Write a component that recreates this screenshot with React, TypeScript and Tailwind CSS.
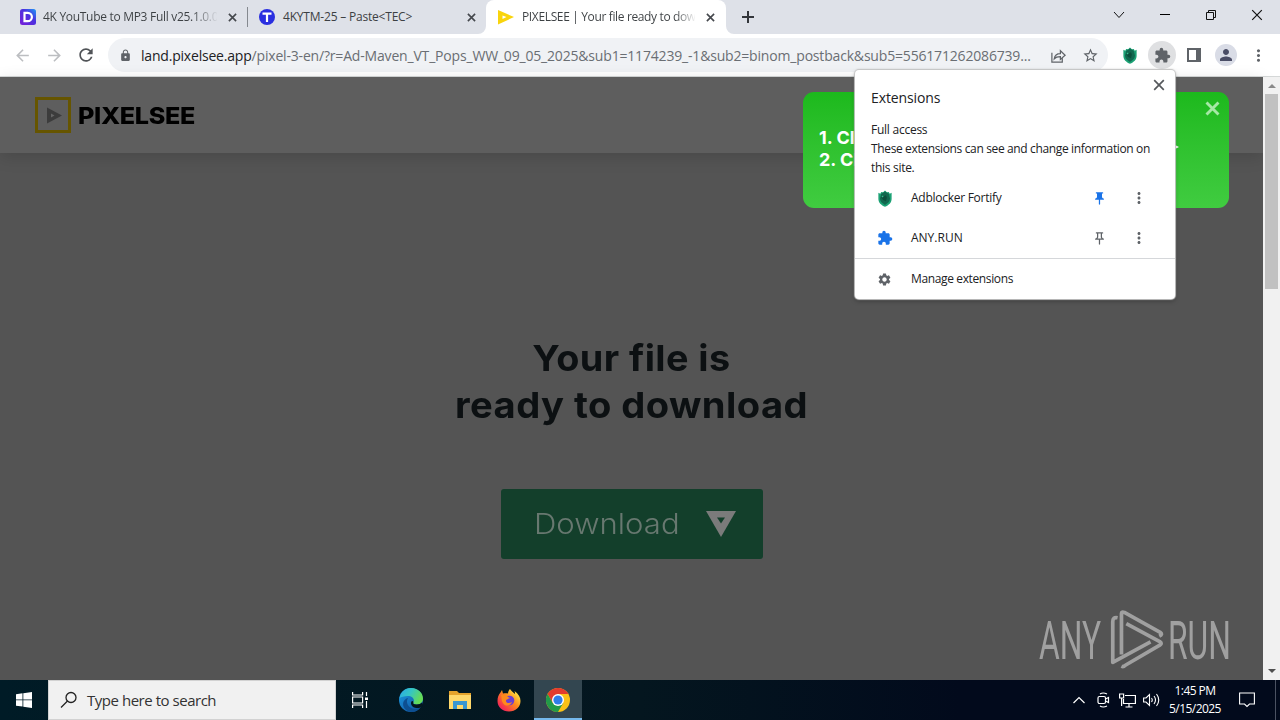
import type { ReactNode } from "react";
import {
  MdArrowBack,
  MdArrowForward,
  MdExtension,
  MdLock,
  MdMoreVert,
  MdOutlinePushPin,
  MdPerson,
  MdPushPin,
  MdRefresh,
  MdSettings,
  MdStarBorder,
} from "react-icons/md";

function Cross({ className }: { className: string }) {
  return (
    <svg viewBox="0 0 10 10" className={className} fill="none" stroke="currentColor">
      <path d="M1 1l8 8M9 1l-8 8" />
    </svg>
  );
}

function ShieldIcon() {
  return (
    <svg viewBox="0 0 16 18" className="h-[17px] w-4">
      <path d="M1 3l2 1 1-2 2 .5L8 .5l2 2 2-.5 1 2 2-1v6.500c0 4-3 6.500-7 8.300-4-1.800-7-4.300-7-8.300z" fill="#1ba174" />
      <path d="M4 4l2-1 2-1.500L10 3l2 1 1.300 5c0 3-2.300 5-5.300 6.800C5 14 2.700 12 2.700 9z" fill="#12684f" />
      <path d="M6 5l1 1.500 2-1 1 2.500-1 4-3-1.500-2-2.500z" fill="#0c4f3c" />
      <path d="M4.500 6.500l1.500-1 .500 1.500-1.500 1z" fill="#35c08e" />
    </svg>
  );
}

function Tab({ icon, title, active = false }: { icon: ReactNode; title: ReactNode; active?: boolean }) {
  return (
    <div
      className={
        active
          ? "relative flex h-[34px] w-60 items-center rounded-t-lg bg-white pl-3"
          : "relative flex h-[34px] w-[239px] items-center pl-3"
      }
    >
      {active && (
        <>
          <svg className="absolute bottom-0 -left-2 size-2" viewBox="0 0 8 8">
            <path d="M8 0v8H0a8 8 0 0 0 8-8z" fill="#fff" />
          </svg>
          <svg className="absolute -right-2 bottom-0 size-2" viewBox="0 0 8 8">
            <path d="M0 0v8h8a8 8 0 0 1-8-8z" fill="#fff" />
          </svg>
        </>
      )}
      <div className="w-4 shrink-0">{icon}</div>
      <div className="ml-[7px] w-[174px] shrink-0 overflow-hidden text-[12px] whitespace-nowrap text-[#3c4043]">
        {title}
      </div>
      <Cross className="ml-[11px] size-[9px] shrink-0 stroke-[1.8] text-[#45484d]" />
    </div>
  );
}

function TabStrip() {
  return (
    <div className="flex h-[34px] bg-[#dee1e8] pl-2">
      <Tab
        icon={
          <svg viewBox="0 0 16 16" className="size-4">
            <defs>
              <linearGradient id="dg" x1="0" y1="1" x2="1" y2="0">
                <stop offset="0" stopColor="#7a1fd8" />
                <stop offset=".6" stopColor="#4a32e0" />
                <stop offset="1" stopColor="#1f9cf5" />
              </linearGradient>
            </defs>
            <rect width="16" height="16" rx="2.500" fill="url(#dg)" />
            <path d="M4.500 3.800h3.200a4.200 4.200 0 0 1 0 8.400H4.500z" fill="none" stroke="#fff" strokeWidth="2.200" />
          </svg>
        }
        title={
          <span className="bg-linear-to-r from-[#3c4043] from-85% to-transparent bg-clip-text tracking-[-0.3px] text-transparent">
            4K YouTube to MP3 Full v25.1.0.0
          </span>
        }
      />
      <div className="relative">
        <span className="absolute top-[7px] left-0 h-5 w-px bg-[#85898f]" />
        <Tab
          icon={
            <svg viewBox="0 0 16 16" className="size-4">
              <circle cx="8" cy="8" r="8" fill="#2a2fe0" />
              <path d="M3.500 4.600h9M8 4.600V13" stroke="#fff" strokeWidth="2.200" />
            </svg>
          }
          title={<span className="ml-[1px] tracking-[-0.2px]">4KYTM-25 – Paste&lt;TEC&gt;</span>}
        />
      </div>
      <Tab
        active
        icon={
          <svg viewBox="0 0 16 16" className="size-4">
            <path d="M0 1l16 7-16 7.500z" fill="#f9d40c" />
            <path d="M4.500 6.500L8.500 8l-4 2z" fill="#fff" />
          </svg>
        }
        title={
          <span className="ml-[1px] bg-linear-to-r from-[#3c4043] from-88% to-transparent bg-clip-text tracking-[-0.36px] text-transparent">
            PIXELSEE | Your file ready to dow
          </span>
        }
      />
      <svg viewBox="0 0 12 12" className="mt-[11px] ml-4 size-3" stroke="#33363b" strokeWidth="2">
        <path d="M6 0v12M0 6h12" />
      </svg>
      <div className="ml-auto flex h-[29px] items-center text-[#111]">
        <div className="flex w-[46px] justify-center">
          <svg viewBox="0 0 12 12" className="size-3" fill="none" stroke="currentColor">
            <path d="M1 3l5 5.500L11 3" />
          </svg>
        </div>
        <div className="flex w-[46px] justify-center">
          <span className="h-px w-[10px] bg-black" />
        </div>
        <div className="flex w-[46px] justify-center">
          <svg viewBox="0 0 10 10" className="size-[10px]" fill="none" stroke="currentColor">
            <path d="M.5 2.500h7v7h-7zM2.500 2.500v-2h7v7h-2" />
          </svg>
        </div>
        <div className="flex w-[46px] justify-center">
          <Cross className="size-[12px] stroke-[1]" />
        </div>
      </div>
    </div>
  );
}

function Slot({ children }: { children: ReactNode }) {
  return <div className="flex w-8 shrink-0 items-center justify-center">{children}</div>;
}

function Toolbar() {
  return (
    <div className="flex h-[43px] items-center border-b border-[#d5d8d8] bg-white pl-1.5 text-[#5f6368]">
      <Slot>
        <MdArrowBack className="size-[19px] text-[#bcbec1]" />
      </Slot>
      <Slot>
        <MdArrowForward className="size-[19px] text-[#bcbec1]" />
      </Slot>
      <Slot>
        <MdRefresh className="size-5 text-[#505357]" />
      </Slot>
      <div className="ml-1.5 flex h-[34px] w-[1000px] items-center rounded-full bg-[#f0f2f5]">
        <MdLock className="ml-[11px] size-[13px] shrink-0" />
        <div className="ml-[9px] w-[901px] shrink-0 text-[14px] whitespace-nowrap text-[#6a6e73]">
          <span className="tracking-[-0.2px] text-[#202124]">land.pixelsee.app</span>
          <span className="tracking-[-0.18px]">
            /pixel-3-en/?r=Ad-Maven_VT_Pops_WW_09_05_2025&amp;sub1=1174239_-1&amp;sub2=binom_postback&amp;sub5=556171262086739...
          </span>
        </div>
        <Slot>
          <svg viewBox="0 0 18 18" className="size-[17px]" fill="none" stroke="currentColor" strokeWidth="1.300">
            <path d="M2 6v10h11v-4M4.500 12.500c.5-4 3-5.500 6.500-5.500V4l5 4.700-5 4.500v-3c-3 0-5 .5-6.500 2.300z" />
          </svg>
        </Slot>
        <Slot>
          <MdStarBorder className="size-[17px]" />
        </Slot>
      </div>
      <div className="ml-1.5 flex">
        <Slot>
          <ShieldIcon />
        </Slot>
        <Slot>
          <div className="flex size-7 items-center justify-center rounded-full bg-[#dfe0e2]">
            <MdExtension className="size-[17px]" />
          </div>
        </Slot>
        <Slot>
          <svg viewBox="0 0 14 14" className="size-[14px]">
            <path d="M1 1h12v12H1z" fill="none" stroke="currentColor" strokeWidth="2" />
            <path d="M9 1h4v12H9z" fill="currentColor" />
          </svg>
        </Slot>
        <Slot>
          <div className="flex size-[22px] items-center justify-center rounded-full bg-[#d9dce6]">
            <MdPerson className="size-[18px] text-[#4a4d66]" />
          </div>
        </Slot>
        <Slot>
          <MdMoreVert className="size-[19px]" />
        </Slot>
      </div>
    </div>
  );
}

function ExtensionRow({ icon, name, pin }: { icon: ReactNode; name: ReactNode; pin: ReactNode }) {
  return (
    <div className="flex h-10 items-center pl-[21px]">
      <div className="flex w-[18px] justify-center">{icon}</div>
      <div className="ml-[17px] w-[180px]">{name}</div>
      <div className="flex w-4 justify-center">{pin}</div>
      <MdMoreVert className="ml-[23px] size-[18px] text-[#5f6368]" />
    </div>
  );
}

function ExtensionsPopup() {
  return (
    <div className="absolute top-[70px] left-[855px] h-[229px] w-80 rounded bg-white text-[12px] text-[#202124] shadow-[0_0_1px_1px_#c4c4c4,0_2px_5px_rgba(0,0,0,.3)]">
      <div className="flex h-[50px] justify-between pl-4">
        <h2 className="mt-[18px] text-[14px] leading-5 tracking-[-0.1px]">Extensions</h2>
        <Cross className="mt-[9px] mr-[10px] size-[12px] stroke-[1.4] text-[#55585c]" />
      </div>
      <div className="h-[58px] pl-4 leading-[19px] whitespace-nowrap">
        <p className="tracking-[-0.25px]">Full access</p>
        <p className="tracking-[-0.36px]">These extensions can see and change information on</p>
        <p className="tracking-[-0.3px]">this site.</p>
      </div>
      <ExtensionRow
        icon={<ShieldIcon />}
        name={<span className="tracking-[-0.27px]">Adblocker Fortify</span>}
        pin={<MdPushPin className="size-[15px] text-[#1a73e8]" />}
      />
      <ExtensionRow
        icon={<MdExtension className="size-4 text-[#1a73e8]" />}
        name={<span>ANY.RUN</span>}
        pin={<MdOutlinePushPin className="size-[15px] text-[#5f6368]" />}
      />
      <div className="flex h-[41px] items-center border-t border-[#d5d7da] pl-[22px]">
        <MdSettings className="size-[15px] text-[#5f6368]" />
        <span className="ml-[19px] tracking-[-0.37px]">Manage extensions</span>
      </div>
    </div>
  );
}

function Toast() {
  return (
    <div className="absolute top-[15px] left-[803px] flex h-[116px] w-[426px] rounded-[11px] bg-linear-to-b from-[#1cb91c] to-[#40cc40] pl-4 font-['Inter',sans-serif] text-white">
      <ol className="mt-[35px] text-[18px] leading-[22px] font-bold whitespace-nowrap">
        <li>1. Cl</li>
        <li>2. Cl</li>
      </ol>
      <svg viewBox="0 0 10 10" className="absolute top-[50px] left-[366px] size-[10px]">
        <path d="M0 0l10 5-10 5z" fill="#fff" />
      </svg>
      <Cross className="absolute top-[9px] right-[9px] size-[15px] stroke-[1.9] text-[#a5e8a5]" />
    </div>
  );
}

function Watermark() {
  return (
    <div className="absolute top-[533px] left-[1039px] flex h-[62px] w-[196px] items-center font-['Roboto',sans-serif] text-[#a0a0a0]">
      <div className="w-[69px]">
        <span className="inline-block origin-left scale-x-[0.6] text-[53px] leading-[62px]">ANY</span>
      </div>
      <svg viewBox="0 0 56 64" className="h-[62px] w-14 shrink-0" fill="none" stroke="currentColor" strokeWidth="3.800" strokeLinejoin="round">
        <path d="M9 8q-5-1-5 4v42l39-21" />
        <path d="M13 46V3.500q0-2 3-1L53 23q3 2-1 4" />
        <path d="M18 14l35 19q2 1.500 0 3L17 57q-2 2-4 1" />
      </svg>
      <div className="ml-1 w-16">
        <span className="inline-block origin-left scale-x-[0.6] text-[53px] leading-[62px]">RUN</span>
      </div>
    </div>
  );
}

function LandingPage() {
  return (
    <div className="relative flex h-[603px]">
      <main className="flex w-[1263px] flex-col items-center bg-[#545454] font-['Inter',sans-serif]">
        <header className="flex h-[76px] w-full items-center bg-[#5e5e5e] pl-[35px] shadow-[0_4px_16px_rgba(0,0,0,.14)]">
          <svg viewBox="0 0 36 36" className="size-9">
            <path d="M1.500 1.500h33v33h-33z" fill="none" stroke="#665500" strokeWidth="3" />
            <path d="M12 10.500v16L27 18.500z" fill="#3c3c3c" />
            <path d="M16 16.500v4l3.500-2z" fill="#666" />
          </svg>
          <span className="mt-[2px] ml-[7px] origin-left scale-x-[1.095] text-[23px] font-extrabold tracking-[-0.3px] text-black">
            PIXELSEE
          </span>
        </header>
        <h1 className="mt-[182px] text-center text-[36px] leading-[47px] font-bold text-[#0c1012]">
          <span className="inline-block scale-x-[1.05] tracking-[0.4px]">Your file is</span>
          <br />
          <span className="inline-block scale-x-[1.06] tracking-[0.4px]">ready to download</span>
        </h1>
        <button className="mt-[60px] flex h-[70px] w-[262px] items-center rounded-[3px] bg-[#133f2b] pl-[33px] text-[28px] font-light text-[#687870]">
          <span className="w-[172px] origin-left scale-x-[1.11] text-left">Download</span>
          <svg viewBox="0 0 30 26" className="h-[26px] w-[30px]">
            <path d="M0 0h30L15 26z" fill="#7b7b7b" />
            <path d="M11 6.500h8l-4 6z" fill="#133f2b" />
          </svg>
        </button>
      </main>
      <div className="flex w-[17px] flex-col items-center bg-[#f1f1f1]">
        <svg viewBox="0 0 8 4" className="mt-[7px] h-1 w-2">
          <path d="M4 0l4 4H0z" fill="#8a8a8a" />
        </svg>
        <div className="mt-[6px] h-[195px] w-[13px] bg-[#c1c1c1]" />
        <svg viewBox="0 0 8 4" className="mt-auto mb-[7px] h-1 w-2">
          <path d="M0 0h8L4 4z" fill="#505050" />
        </svg>
      </div>
      <Toast />
      <Watermark />
    </div>
  );
}

function Taskbar() {
  return (
    <footer className="flex h-10 items-center bg-linear-to-r from-[#001b26] via-[#04161f] via-50% to-[#020a1c] to-75% text-white">
      <div className="flex w-12 justify-center">
        <svg viewBox="0 0 16 16" className="size-4" fill="#fff">
          <path d="M0 2.200l6.500-.9v6.200H0zM7.300 1.200L16 0v7.500H7.300zM0 8.300h6.500v6.200L0 13.700zM7.300 8.300H16V16l-8.700-1.200z" />
        </svg>
      </div>
      <div className="flex h-10 w-72 items-center border border-[#d2d2d2] bg-[#f1f1f1] pl-[11px] text-[#333]">
        <svg viewBox="0 0 18 18" className="size-[18px]" fill="none" stroke="#222" strokeWidth="1.300">
          <circle cx="11" cy="6.500" r="5" />
          <path d="M7.500 10L1 16.500" />
        </svg>
        <span className="ml-[9px] text-[15px] tracking-[-0.47px]">Type here to search</span>
      </div>
      <div className="flex w-12 justify-center">
        <svg viewBox="0 0 16 16" className="size-4" fill="none" stroke="#fff" strokeWidth="1.200">
          <path d="M.6 0v3h10V0M.6 16v-3h10v3M.6 5h10v6H.6zM14.500 0v4M14.500 9v7" />
          <path d="M13 5.500h3v2.500h-3z" fill="#fff" stroke="none" />
        </svg>
      </div>
      <div className="ml-[2px] flex w-[50px] justify-center">
        <svg viewBox="0 0 24 24" className="size-6">
          <defs>
            <linearGradient id="ea" x1="0" y1="0" x2="1" y2=".4">
              <stop offset="0" stopColor="#2aa9e8" />
              <stop offset=".5" stopColor="#35c6c4" />
              <stop offset="1" stopColor="#66dc55" />
            </linearGradient>
            <linearGradient id="eb" x1="0" y1="0" x2="1" y2="1">
              <stop offset="0" stopColor="#1b9de2" />
              <stop offset="1" stopColor="#114a9b" />
            </linearGradient>
          </defs>
          <circle cx="12" cy="12" r="12" fill="url(#eb)" />
          <path d="M.5 10C2 3 7-.3 12.500 0 19 .3 24 5 24 10.500c0 4-3 6-6.500 6-3 0-4-1-3-2.500C16 11 13 8 9 8 5 8 2 9 .5 10z" fill="url(#ea)" />
          <path d="M9 10c-3 5 1 11 7 11 3 0 5-1 6-2-4 6-12 6.500-16 2-4-5-1-10 3-11z" fill="#0d4f91" />
          <path d="M14.500 14c-1 1.500 0 2.500 3 2.500 2.500 0 4.500-.8 5.500-2l1 3-2.500 2c-4 1.500-9 0-9.500-4 0-2 1-3.500 2.500-1.500z" fill="#04161f" />
        </svg>
      </div>
      <div className="flex w-12 justify-center">
        <svg viewBox="0 0 22 18" className="h-[18px] w-[22px]">
          <path d="M0 0h8l2 2h12v4H0z" fill="#e5a32c" />
          <path d="M0 4h22v14H0z" fill="#ffd86b" />
          <path d="M4 10h14v8h-4v-4H8v4H4z" fill="#3a96d1" />
        </svg>
      </div>
      <div className="flex w-[50px] justify-center">
        <svg viewBox="0 0 24 24" className="size-6">
          <defs>
            <linearGradient id="fx" x1="1" y1="0" x2="0" y2="1">
              <stop offset=".1" stopColor="#fff04a" />
              <stop offset=".45" stopColor="#ff8a1c" />
              <stop offset=".8" stopColor="#f5304f" />
              <stop offset="1" stopColor="#d7168c" />
            </linearGradient>
          </defs>
          <path d="M13 1c1 2 3 3 5 5 0-1 0-2-.5-3 4 3 6 6 6 10 0 6-5 10.500-11.500 10.500S.5 19 .5 13c0-4 1-6 3-8.500L5 2l1 3.500c2-.5 4-.5 5 0 0-2 1-3.500 2-4.500z" fill="url(#fx)" />
          <circle cx="12.500" cy="12.500" r="4.800" fill="#6b3fd2" />
          <path d="M4 7c3 0 6 0 7 2l2 1c-1 1-4 1-4 3s3 3 6 1c-1 4-7 5-9 1-2-3-1-6-2-8z" fill="#ff8a1c" />
        </svg>
      </div>
      <div className="flex h-10 w-12 items-center justify-center border-b-2 border-[#76b9ed] bg-[#334650]">
        <svg viewBox="0 0 24 24" className="mt-0.5 size-6">
          <circle cx="12" cy="12" r="12" fill="#fbc116" />
          <path d="M12 6h10.400A12 12 0 0 0 1.600 6l5.200 9z" fill="#e33b2e" />
          <path d="M1.600 6A12 12 0 0 0 12 24l5.200-9H6.800z" fill="#229a49" />
          <circle cx="12" cy="12" r="6" fill="#fff" />
          <circle cx="12" cy="12" r="4.600" fill="#2f7de9" />
        </svg>
      </div>
      <div className="ml-auto flex items-center">
        <div className="flex w-6 justify-center">
          <svg viewBox="0 0 12 8" className="h-2 w-3" fill="none" stroke="#fff" strokeWidth="1.200">
            <path d="M.5 7L6 1.500 11.500 7" />
          </svg>
        </div>
        <div className="flex w-6 justify-center">
          <svg viewBox="0 0 14 16" className="h-4 w-[14px]" fill="none" stroke="#fff" strokeWidth="1.200">
            <path d="M4 2Q7 0 11 2M4 14q3 2 7 0" />
            <rect x="2" y="4.500" width="7.500" height="7" rx="1.500" />
            <path d="M9.500 7l3-1.500v5l-3-1.500" />
          </svg>
        </div>
        <div className="flex w-6 justify-center">
          <svg viewBox="0 0 17 15" className="h-[15px] w-[17px]" fill="none" stroke="#fff" strokeWidth="1.200">
            <path d="M6 2.500h10.400v8H4.500V6M10 10.500V14M6.500 14h7M.6 1h4v4h-4zM2.600 5v8" />
          </svg>
        </div>
        <div className="flex w-6 justify-center">
          <svg viewBox="0 0 17 14" className="h-[14px] w-[17px]" fill="none" stroke="#fff" strokeWidth="1.100">
            <path d="M.6 5h2.400L6.500 1.500v11L3 9H.6zM8.500 5q1.500 2 0 4M11 3q3 4 0 8M13.500 1q4.500 6 0 12" />
          </svg>
        </div>
        <div className="w-16 text-center text-[12px] leading-[18px] tracking-[-0.55px] whitespace-nowrap">
          <div>1:45 PM</div>
          <div>5/15/2025</div>
        </div>
        <svg viewBox="0 0 16 16" className="ml-[12px] size-4" fill="none" stroke="#fff" strokeWidth="1.100">
          <path d="M.6 1h14.800v11H10.500L8 14.500 5.500 12H.6z" />
        </svg>
        <span className="mr-1 ml-5 h-10 w-px bg-[#4b5262]" />
      </div>
    </footer>
  );
}

export default function App() {
  return (
    <div className="relative h-[720px] w-[1280px] overflow-hidden bg-white font-['Open_Sans','Noto_Sans',sans-serif]">
      <TabStrip />
      <Toolbar />
      <LandingPage />
      <Taskbar />
      <ExtensionsPopup />
    </div>
  );
}
